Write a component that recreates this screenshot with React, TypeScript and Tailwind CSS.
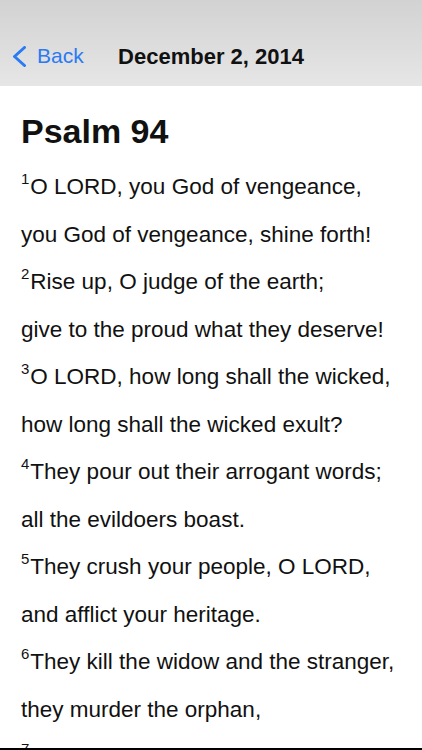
const verses: { n: number; lines: string[] }[] = [
  { n: 1, lines: ["O LORD, you God of vengeance,", "you God of vengeance, shine forth!"] },
  { n: 2, lines: ["Rise up, O judge of the earth;", "give to the proud what they deserve!"] },
  { n: 3, lines: ["O LORD, how long shall the wicked,", "how long shall the wicked exult?"] },
  { n: 4, lines: ["They pour out their arrogant words;", "all the evildoers boast."] },
  { n: 5, lines: ["They crush your people, O LORD,", "and afflict your heritage."] },
  { n: 6, lines: ["They kill the widow and the stranger,", "they murder the orphan,"] },
  { n: 7, lines: ["and they say, \u201cThe LORD does not see;", "the God of Jacob does not perceive.\u201d"] },
];

function NavBar() {
  return (
    <div className="h-[86px] pt-[26px] bg-gradient-to-b from-[#d2d2d2] to-[#e6e6e6] grid grid-cols-[1fr_auto_1fr] items-center">
      <button className="flex items-center gap-[11px] pl-[12px] text-[#2a7af3] text-[21px]">
        <svg width="14" height="21" viewBox="0 0 14 21" fill="none">
          <path d="M12.5 1.5 L2.5 10.5 L12.5 19.5" stroke="#2a7af3" strokeWidth="3" strokeLinecap="round" strokeLinejoin="round" />
        </svg>
        <span>Back</span>
      </button>
      <h1 className="text-[22px] font-bold text-[#111]">December 2, 2014</h1>
      <div />
    </div>
  );
}

export default function App() {
  return (
    <div className="w-[422px] h-[750px] bg-white flex flex-col overflow-hidden" style={{ fontFamily: '"Liberation Sans", Arial, sans-serif' }}>
      <NavBar />
      <main className="flex-1 overflow-hidden px-[21px] pt-[25px] text-[#111]">
        <h2 className="text-[34px] font-bold leading-[40px] mb-[12px]">Psalm 94</h2>
        {verses.map((v) => (
          <div key={v.n}>
            {v.lines.map((line, i) => (
              <div key={i} className="text-[22.5px] leading-[47.5px] whitespace-nowrap">
                {i === 0 && <sup className="text-[15px] relative -top-[10px] mr-[1px]">{v.n}</sup>}
                {line}
              </div>
            ))}
          </div>
        ))}
      </main>
      <div className="h-[2px] bg-black" />
    </div>
  );
}
